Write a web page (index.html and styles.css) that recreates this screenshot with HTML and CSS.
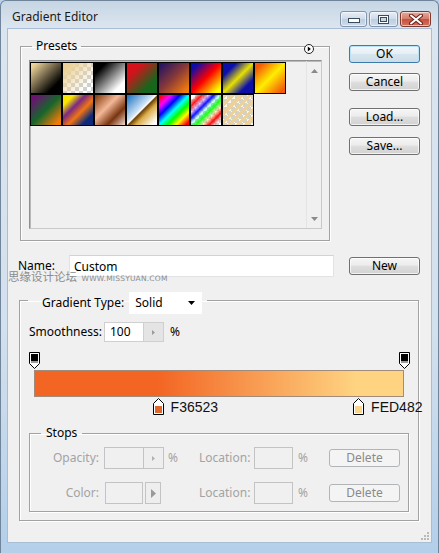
FILE: index.html
```html
<!DOCTYPE html>
<html lang="en">
<head>
<meta charset="utf-8">
<title>Gradient Editor</title>
<link rel="stylesheet" href="styles.css">
</head>
<body>
<div class="window">
  <div class="titlebar">
    <span class="title">Gradient Editor</span>
    <div class="caption">
      <span class="cap cap-min"><svg width="12" height="5" viewBox="0 0 12 5"><rect x="0.5" y="0.5" width="11" height="4" fill="#fff" stroke="#3b4b5e"/></svg></span>
      <span class="cap cap-max"><svg width="11" height="9" viewBox="0 0 11 9"><rect x="0.5" y="0.5" width="10" height="8" fill="#fff" stroke="#3b4b5e"/><rect x="2.5" y="2.5" width="6" height="4" fill="#c9d6e3" stroke="#3b4b5e"/></svg></span>
      <span class="cap cap-close"><svg width="14" height="11" viewBox="0 0 14 11"><path d="M2 1.5L12 9.5M12 1.5L2 9.5" stroke="#6b2018" stroke-width="4" stroke-linecap="round"/><path d="M2 1.5L12 9.5M12 1.5L2 9.5" stroke="#fff" stroke-width="2" stroke-linecap="round"/></svg></span>
    </div>
  </div>

  <div class="client">
    <div class="top">
      <fieldset class="group presets">
        <legend>Presets</legend>
        <span class="menu-btn"><svg width="10" height="10" viewBox="0 0 10 10"><circle cx="5" cy="5" r="4.5" fill="#fff" stroke="#222"/><path d="M3.8 2.6L6.8 5L3.8 7.4Z" fill="#000"/></svg></span>
        <div class="list">
          <div class="swatches">
            <span class="sw sw1"></span>
            <span class="sw sw2"></span>
            <span class="sw sw3"></span>
            <span class="sw sw4"></span>
            <span class="sw sw5"></span>
            <span class="sw sw6"></span>
            <span class="sw sw7"></span>
            <span class="sw sw8"></span>
            <span class="sw sw9"></span>
            <span class="sw sw10"></span>
            <span class="sw sw11"></span>
            <span class="sw sw12"></span>
            <span class="sw sw13"></span>
            <span class="sw sw14"></span>
            <span class="sw sw15"></span>
          </div>
          <div class="vscroll">
            <svg width="7" height="4" viewBox="0 0 7 4"><path d="M0 4L3.5 0L7 4Z" fill="#8a8a8a"/></svg>
            <svg width="7" height="4" viewBox="0 0 7 4"><path d="M0 0L3.5 4L7 0Z" fill="#8a8a8a"/></svg>
          </div>
        </div>
      </fieldset>
      <div class="buttons">
        <button class="btn default">OK</button>
        <button class="btn btn-cancel">Cancel</button>
        <button class="btn btn-load">Load...</button>
        <button class="btn btn-save">Save...</button>
      </div>
    </div>

    <div class="name-row">
      <label class="name-label" for="gname">Name:</label>
      <input id="gname" class="name-input" type="text" value="Custom">
      <button class="btn btn-new">New</button>
    </div>

    <fieldset class="group gradient">
      <legend class="gtype">
        <span class="gtype-label">Gradient Type:</span>
        <span class="select">Solid<svg class="caret" width="7" height="4" viewBox="0 0 7 4"><path d="M0 0H7L3.5 4Z" fill="#000"/></svg></span>
      </legend>

      <div class="smooth-row">
        <span class="smooth-label">Smoothness:</span>
        <span class="field">100</span>
        <span class="spin"><svg width="3" height="5" viewBox="0 0 3 5"><path d="M0 0L3 2.5L0 5Z" fill="#9a9a9a"/></svg></span>
        <span class="pct">%</span>
      </div>

      <div class="track opacity-track">
        <span class="ostop" style="left:0%"><svg width="11" height="17" viewBox="0 0 11 17"><path d="M0.5 0.5H10.5V11.5L5.5 16.5L0.5 11.5Z" fill="#fff" stroke="#000"/><rect x="2" y="2" width="7" height="7" fill="#000"/><rect x="2" y="9" width="7" height="2" fill="#9a9a9a"/></svg></span>
        <span class="ostop" style="left:100%"><svg width="11" height="17" viewBox="0 0 11 17"><path d="M0.5 0.5H10.5V11.5L5.5 16.5L0.5 11.5Z" fill="#fff" stroke="#000"/><rect x="2" y="2" width="7" height="7" fill="#000"/><rect x="2" y="9" width="7" height="2" fill="#9a9a9a"/></svg></span>
      </div>

      <div class="bar"></div>

      <div class="track color-track">
        <span class="cstop" style="left:33.4%"><svg width="11" height="17" viewBox="0 0 11 17"><path d="M5.5 0.5L10.5 5.5V16.5H0.5V5.5Z" fill="#fff" stroke="#000"/><rect x="2" y="8" width="7" height="7" fill="#e0662c"/></svg><span class="hex">F36523</span></span>
        <span class="cstop" style="left:87.6%"><svg width="11" height="17" viewBox="0 0 11 17"><path d="M5.5 0.5L10.5 5.5V16.5H0.5V5.5Z" fill="#fff" stroke="#000"/><rect x="2" y="8" width="7" height="7" fill="#fbd489"/></svg><span class="hex">FED482</span></span>
      </div>

      <fieldset class="group stops">
        <legend>Stops</legend>
        <div class="stop-row">
          <span class="s-label">Opacity:</span>
          <span class="s-combo"><span class="field dis">&nbsp;</span><span class="spin dis"><svg width="3" height="5" viewBox="0 0 3 5"><path d="M0 0L3 2.5L0 5Z" fill="#b0b0b0"/></svg></span></span>
          <span class="s-pct">%</span>
          <span class="s-loc">Location:</span>
          <span class="field dis loc"></span>
          <span class="s-pct2">%</span>
          <button class="btn disabled" disabled>Delete</button>
        </div>
        <div class="stop-row row2">
          <span class="s-label">Color:</span>
          <span class="s-combo"><span class="field dis color-field"></span><span class="color-arrow"><svg width="5" height="9" viewBox="0 0 5 9"><path d="M0 0L5 4.5L0 9Z" fill="#9a9a9a"/></svg></span></span>
          <span class="s-pct"></span>
          <span class="s-loc">Location:</span>
          <span class="field dis loc"></span>
          <span class="s-pct2">%</span>
          <button class="btn disabled" disabled>Delete</button>
        </div>
      </fieldset>
    </fieldset>

    <svg class="grip" width="9" height="9" viewBox="0 0 9 9"><g fill="#b9b9b9"><rect x="7" y="1" width="2" height="2"/><rect x="4" y="4" width="2" height="2"/><rect x="7" y="4" width="2" height="2"/><rect x="1" y="7" width="2" height="2"/><rect x="4" y="7" width="2" height="2"/><rect x="7" y="7" width="2" height="2"/></g></svg>
  </div>

  <div class="watermark">思缘设计论坛 <span class="wm-url">WWW.MISSYUAN.COM</span></div>
</div>
</body>
</html>
```

FILE: styles.css
```css
* { box-sizing: border-box; }
html, body { margin: 0; padding: 0; }
body {
  width: 439px;
  height: 553px;
  overflow: hidden;
  background: #b9d1ea;
  font-family: "Noto Sans", "Open Sans", "DejaVu Sans", sans-serif;
  font-size: 12px;
  color: #000;
}

.window {
  position: relative;
  width: 439px;
  height: 553px;
  display: flex;
  flex-direction: column;
  background: linear-gradient(to bottom, #c6d5e4 0, #dbe5ef 26px, #d3e0ed 60%, #b3cfea 100%);
  border: 1px solid #70849a;
  border-bottom: 0;
  border-radius: 6px 6px 0 0;
}

/* ---------- title bar ---------- */
.titlebar {
  height: 28px;
  display: flex;
  align-items: flex-start;
  justify-content: space-between;
  padding: 0 7px 0 11px;
}
.title {
  padding-top: 8px;
  line-height: 16px;
  font-size: 12px;
  color: #1a1a1a;
}
.caption {
  display: flex;
  gap: 2px;
  margin-top: 10px;
}
.cap {
  height: 16px;
  display: flex;
  align-items: center;
  justify-content: center;
  border: 1px solid #7f93aa;
  border-radius: 3px;
  box-shadow: inset 0 0 0 1px rgba(255,255,255,0.55);
}
.cap-min {
  width: 27px;
  align-items: flex-end;
  padding-bottom: 3px;
  background: linear-gradient(#e7eef6, #cfdbe8 50%, #bccde0 50%, #cfdcea);
}
.cap-max {
  width: 29px;
  background: linear-gradient(#e7eef6, #cfdbe8 50%, #bccde0 50%, #cfdcea);
}
.cap-close {
  width: 31px;
  border-color: #7d3a30;
  background: linear-gradient(#e9a99b, #d67b69 50%, #c4503c 50%, #d3745f);
}

/* ---------- client area ---------- */
.client {
  position: relative;
  flex: 1;
  margin: 0 7px 11px 7px;
  background: #f0f0f0;
  box-shadow: 0 0 0 1px #a9bed6;
  padding-top: 9px;
  display: flex;
  flex-direction: column;
}

/* group boxes */
.group {
  margin: 0;
  min-width: 0;
  border: 1px solid #a2a2a2;
  box-shadow: 1px 1px 0 #ffffff, inset 1px 1px 0 #ffffff;
}
.group > legend {
  line-height: 16px;
  font-size: 12px;
}

.top {
  display: flex;
  align-items: flex-start;
}

.presets {
  position: relative;
  width: 310px;
  margin-left: 12px;
  padding: 6px 7px 11px 8px;
}
.presets > legend {
  margin-left: 3px;
  padding: 0 4px;
}
.menu-btn {
  position: absolute;
  right: 15px;
  top: -10px;
  width: 10px;
  height: 10px;
  display: block;
  line-height: 0;
}

.list {
  display: flex;
  height: 169px;
  border: 1px solid #8e8f8f;
  border-right-color: #c9c9c9;
  border-bottom-color: #c9c9c9;
  box-shadow: inset 1px 1px 0 #b9b9b9;
  background: #f0f0f0;
  padding: 1px 0 0 0;
}
.swatches {
  flex: 1;
  display: grid;
  grid-template-columns: repeat(8, 32px);
  grid-auto-rows: 32px;
  align-content: start;
}
.vscroll {
  width: 15px;
  margin-top: -1px;
  border-left: 1px solid #e4e4e4;
  display: flex;
  flex-direction: column;
  justify-content: space-between;
  align-items: center;
  padding: 8px 0 7px 0;
}

.sw {
  display: block;
  border: 1px solid #000;
}
.sw1 { background: linear-gradient(135deg, #ecd298 8%, #000 78%); }
.sw2 {
  background-image:
    linear-gradient(135deg, #ecd298 15%, rgba(236,210,152,0) 80%),
    repeating-conic-gradient(#d0d0d0 0 25%, #ffffff 0 50%);
  background-size: auto, 8px 8px;
}
.sw3 { background: linear-gradient(135deg, #000 18%, #fff 80%); }
.sw4 { background: linear-gradient(135deg, #d5121c 25%, #16661c 75%); }
.sw5 { background: linear-gradient(135deg, #2a1660 8%, #8a3a38 50%, #f47c0c 92%); }
.sw6 { background: linear-gradient(135deg, #0c0ca8 12%, #f00 50%, #ff0 90%); }
.sw7 { background: linear-gradient(135deg, #0c10a8 22%, #e8e000 50%, #0c10a8 78%); }
.sw8 { background: linear-gradient(135deg, #f45a08 12%, #ffee00 50%, #f45a08 92%); }
.sw9 { background: linear-gradient(135deg, #6c1272 10%, #15672a 50%, #f47a08 90%); }
.sw10 { background: linear-gradient(135deg, #f8e600 18%, #7a2a80 38%, #f07414 58%, #0c2a78 82%); }
.sw11 { background: linear-gradient(135deg, #8c4418 4%, #f3b898 40%, #7a3410 70%, #f0dccf 100%); }
.sw12 { background: linear-gradient(135deg, #2878c6 4%, #cfe4f5 44%, #ffffff 49%, #6a4008 52%, #dcac48 64%, #ffffff 92%); }
.sw13 { background: linear-gradient(135deg, #ff0000 4%, #ff00ff 20%, #0000ff 35%, #00ffff 50%, #00ff00 64%, #ffff00 78%, #ff0000 94%); }
.sw14 {
  background-image:
    linear-gradient(135deg, rgba(255,0,0,0) 8%, rgba(255,0,0,.9) 18%, rgba(255,0,255,.2) 28%, rgba(0,0,255,.9) 38%, rgba(0,255,255,.2) 48%, rgba(0,255,0,.9) 58%, rgba(255,255,0,.2) 68%, rgba(255,0,0,.9) 80%, rgba(255,0,255,0) 92%),
    repeating-conic-gradient(#d0d0d0 0 25%, #ffffff 0 50%);
  background-size: auto, 8px 8px;
}
.sw15 {
  background-image:
    repeating-linear-gradient(135deg, rgba(236,210,152,1) 0 3px, rgba(236,210,152,0.2) 3px 6px),
    repeating-conic-gradient(#d0d0d0 0 25%, #ffffff 0 50%);
  background-size: auto, 8px 8px;
}

/* buttons */
.buttons {
  display: flex;
  flex-direction: column;
  margin-left: 19px;
  margin-top: 7px;
}
.btn {
  display: block;
  width: 71px;
  height: 18px;
  padding: 0;
  margin: 0;
  font-family: inherit;
  font-size: 12px;
  line-height: 16px;
  color: #000;
  text-align: center;
  border: 1px solid #707070;
  border-radius: 3px;
  background: linear-gradient(#f6f6f6, #ececec 45%, #dedede 50%, #d2d2d2);
  box-shadow: inset 0 0 0 1px rgba(255,255,255,0.7);
}
.btn.default {
  border-color: #3d7bad;
  background: linear-gradient(#f3f9fc, #e4eef4 50%, #d7e5ee 50%, #cddde8);
  box-shadow: inset 0 0 0 1px #b9e4f7;
}
.btn-cancel { margin-top: 10px; }
.btn-load { margin-top: 17px; }
.btn-save { margin-top: 11px; }
.btn.disabled {
  border-color: #b1b5b8;
  color: #8a8a8a;
  background: #f4f4f4;
  box-shadow: none;
}

/* name row */
.name-row {
  display: flex;
  align-items: center;
  margin-top: 14px;
  padding-left: 10px;
  height: 22px;
}
.name-label {
  width: 51px;
  line-height: 16px;
}
.name-input {
  width: 265px;
  height: 22px;
  margin: 0;
  padding: 0 4px;
  font-family: inherit;
  font-size: 12px;
  color: #000;
  background: #fff;
  border: 1px solid #e2e3e4;
  border-top-color: #d2d3d4;
  outline: none;
}
.btn-new { margin-left: 15px; }

/* gradient group */
.gradient {
  width: 400px;
  margin-left: 11px;
  margin-top: 9px;
  padding: 8px 9px 8px 9px;
}
.gtype {
  margin-left: -1px;
  padding: 6px 5px 0 14px;
  display: flex;
  align-items: center;
}
.gtype-label {
  line-height: 16px;
}
.select {
  margin-left: 5px;
  width: 73px;
  height: 22px;
  background: #fff;
  display: flex;
  align-items: center;
  justify-content: space-between;
  padding: 0 7px 0 6px;
  line-height: 16px;
}

.smooth-row {
  display: flex;
  align-items: center;
  height: 20px;
}
.smooth-label {
  width: 75px;
  line-height: 16px;
}
.field {
  display: flex;
  align-items: center;
  width: 40px;
  height: 20px;
  padding: 0 5px;
  background: #fff;
  border: 1px solid #cfcfcf;
  line-height: 16px;
}
.spin {
  display: flex;
  align-items: center;
  justify-content: center;
  width: 20px;
  height: 20px;
  background: #e4e4e4;
  border: 1px solid #cfcfcf;
  border-left: 0;
}
.pct {
  margin-left: 6px;
  line-height: 16px;
}

/* gradient tracks */
.track {
  position: relative;
  margin-left: 5px;
  width: 370px;
}
.opacity-track {
  height: 17px;
  margin-top: 10px;
}
.ostop {
  position: absolute;
  top: 0;
  transform: translateX(-5px);
  line-height: 0;
}
.bar {
  margin-left: 5px;
  margin-top: 1px;
  width: 370px;
  height: 27px;
  border: 1px solid #a08c7c;
  background: linear-gradient(to right, #F36523 33.4%, #FED482 87.6%);
}
.color-track {
  height: 18px;
  margin-top: 1px;
}
.cstop {
  position: absolute;
  top: 0;
  display: flex;
  align-items: flex-end;
  transform: translateX(-5px);
  white-space: nowrap;
}
.cstop svg { display: block; }
.hex {
  margin-left: 7px;
  font-family: "Liberation Sans", Arial, sans-serif;
  font-size: 14px;
  line-height: 16px;
  color: #111;
}

/* stops group */
.stops {
  width: 380px;
  margin-top: 9px;
  padding: 6px 0 7px 0;
}
.stops > legend {
  margin-left: 11px;
  padding: 0 5px;
}
.stop-row {
  display: grid;
  grid-template-columns: 74px 60px 35px 55px 39px 36px 70px;
  align-items: center;
  height: 22px;
  color: #a3a3a3;
}
.row2 { margin-top: 13px; }
.s-label {
  text-align: right;
  padding-right: 5px;
  line-height: 16px;
}
.s-combo {
  display: flex;
  align-items: center;
}
.field.dis {
  height: 22px;
  background: #f0f0f0;
  border-color: #c3c3c3;
}
.spin.dis {
  height: 22px;
  background: #eeeeee;
  border-color: #c3c3c3;
}
.color-field {
  width: 38px !important;
  margin-left: 1px;
}
.color-arrow {
  display: flex;
  align-items: center;
  justify-content: center;
  width: 16px;
  height: 22px;
  margin-left: 2px;
  border: 1px solid #c3c3c3;
  background: #eeeeee;
}
.s-pct {
  padding-left: 4px;
  line-height: 16px;
}
.s-loc {
  line-height: 16px;
}
.field.loc {
  width: 39px;
}
.s-pct2 {
  padding-left: 5px;
  line-height: 16px;
}

.grip {
  position: absolute;
  right: 2px;
  bottom: 2px;
}

/* watermark over the dialog */
.watermark {
  position: absolute;
  left: 7px;
  top: 268px;
  font-family: "Noto Sans CJK SC", sans-serif;
  font-size: 11.5px;
  line-height: 14px;
  color: #8c8c8c;
  white-space: nowrap;
}
.wm-url {
  font-family: "DejaVu Sans", sans-serif;
  font-size: 7.5px;
  letter-spacing: 0.2px;
  margin-left: 2px;
}
```
